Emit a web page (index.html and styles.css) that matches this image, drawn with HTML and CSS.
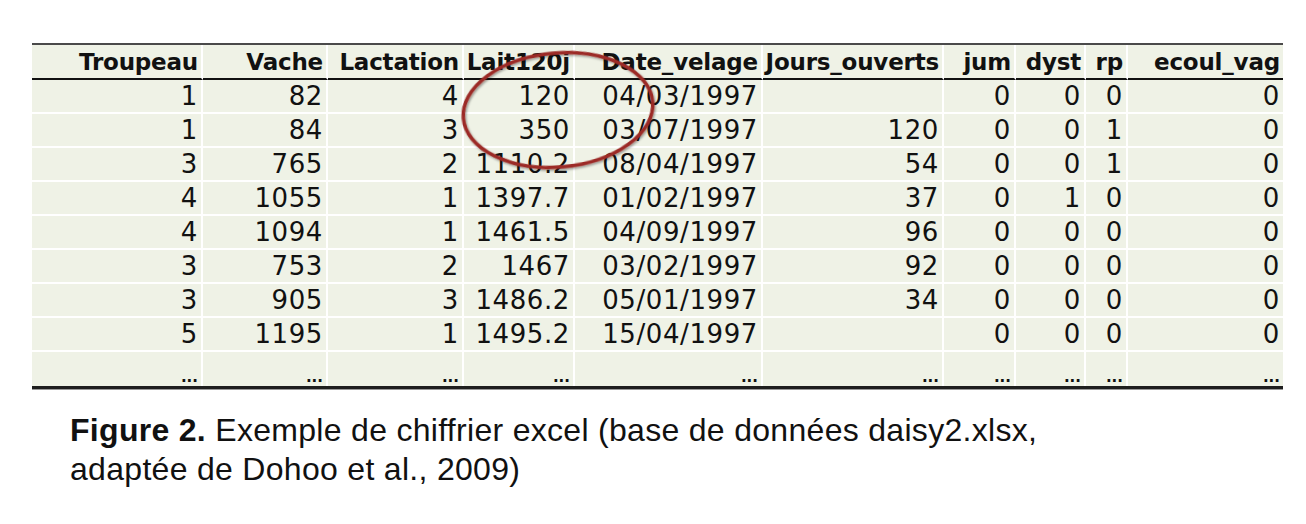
FILE: index.html
```html
<!DOCTYPE html>
<html lang="fr">
<head>
  <meta charset="UTF-8" />
  <meta name="viewport" content="width=device-width, initial-scale=1.0" />
  <title>daisy2</title>
  <link rel="stylesheet" href="styles.css">
</head>
<body>
  <div class="sheet">
    <table class="data">
      <colgroup>
        <col class="c-troupeau"><col class="c-vache"><col class="c-lact"><col class="c-lait">
        <col class="c-date"><col class="c-jours"><col class="c-jum"><col class="c-dyst">
        <col class="c-rp"><col class="c-ecoul">
      </colgroup>
      <thead>
        <tr>
          <th>Troupeau</th><th>Vache</th><th>Lactation</th><th>Lait120j</th><th>Date_velage</th>
          <th>Jours_ouverts</th><th>jum</th><th>dyst</th><th>rp</th><th>ecoul_vag</th>
        </tr>
      </thead>
      <tbody>
        <tr><td>1</td><td>82</td><td>4</td><td>120</td><td>04/03/1997</td><td></td><td>0</td><td>0</td><td>0</td><td>0</td></tr>
        <tr><td>1</td><td>84</td><td>3</td><td>350</td><td>03/07/1997</td><td>120</td><td>0</td><td>0</td><td>1</td><td>0</td></tr>
        <tr><td>3</td><td>765</td><td>2</td><td>1110.2</td><td>08/04/1997</td><td>54</td><td>0</td><td>0</td><td>1</td><td>0</td></tr>
        <tr><td>4</td><td>1055</td><td>1</td><td>1397.7</td><td>01/02/1997</td><td>37</td><td>0</td><td>1</td><td>0</td><td>0</td></tr>
        <tr><td>4</td><td>1094</td><td>1</td><td>1461.5</td><td>04/09/1997</td><td>96</td><td>0</td><td>0</td><td>0</td><td>0</td></tr>
        <tr><td>3</td><td>753</td><td>2</td><td>1467</td><td>03/02/1997</td><td>92</td><td>0</td><td>0</td><td>0</td><td>0</td></tr>
        <tr><td>3</td><td>905</td><td>3</td><td>1486.2</td><td>05/01/1997</td><td>34</td><td>0</td><td>0</td><td>0</td><td>0</td></tr>
        <tr><td>5</td><td>1195</td><td>1</td><td>1495.2</td><td>15/04/1997</td><td></td><td>0</td><td>0</td><td>0</td><td>0</td></tr>
        <tr class="more">
          <td>...</td><td>...</td><td>...</td><td>...</td><td>...</td><td>...</td><td>...</td><td>...</td><td>...</td><td>...</td>
        </tr>
      </tbody>
    </table>

    <svg class="circle" width="240" height="150" viewBox="0 0 240 150">
      <defs>
        <filter id="soft" x="-10%" y="-10%" width="120%" height="120%">
          <feDropShadow dx="1" dy="1.5" stdDeviation="1.2" flood-color="#000" flood-opacity="0.4"/>
        </filter>
      </defs>
      <ellipse cx="120" cy="75" rx="95" ry="57" transform="rotate(-5 120 75)"
               fill="none" stroke="#9c2c27" stroke-width="3.5" filter="url(#soft)"/>
    </svg>
  </div>

  <p class="caption"><b>Figure 2.</b> Exemple de chiffrier excel (base de données daisy2.xlsx,<br>adaptée de Dohoo et al., 2009)</p>
</body>
</html>
```

FILE: styles.css
```css
body {
  margin: 0;
  background: #fff;
  color: #111;
  font-family: "DejaVu Sans", sans-serif;
}
.sheet {
  position: relative;
  margin: 43px 0 0 32px;
  width: 1251px;
}
.data {
  table-layout: fixed;
  width: 1251px;
  border-collapse: separate;
  border-spacing: 0;
  border-top: 2px solid #4a4a4a;
  border-bottom: 3px solid #1e1e1e;
  box-shadow: 0 1px 0 #999;
}
.c-troupeau { width: 171px; }
.c-vache { width: 125px; }
.c-lact { width: 136px; }
.c-lait { width: 111px; }
.c-date { width: 188px; }
.c-jours { width: 181px; }
.c-jum { width: 72px; }
.c-dyst { width: 70px; }
.c-rp { width: 42px; }
.c-ecoul { width: 155px; }

.data th,
.data td {
  background: #eff2e6;
  border-right: 2px solid #fff;
  text-align: right;
  padding: 0 3px 0 0;
  white-space: nowrap;
  overflow: hidden;
}
.data th:last-child,
.data td:last-child {
  border-right: none;
}
.data th {
  height: 33px;
  font-size: 23px;
  font-weight: 700;
  letter-spacing: -0.2px;
  border-bottom: 2px solid #111;
}
.data td {
  height: 32px;
  font-size: 26px;
  letter-spacing: 0.6px;
  border-bottom: 2px solid #fff;
}
.data tbody tr:last-child td {
  border-bottom: none;
}
.more td {
  height: 34px;
  font-size: 15px;
  font-weight: 700;
  letter-spacing: 0;
  vertical-align: bottom;
  line-height: 18px;
}
.circle {
  position: absolute;
  left: 406px;
  top: -8px;
  pointer-events: none;
}
.caption {
  margin: 22px 0 0 70px;
  font-family: "Liberation Sans", sans-serif;
  font-size: 32px;
  line-height: 39px;
  letter-spacing: 0.3px;
  color: #111;
}
```
